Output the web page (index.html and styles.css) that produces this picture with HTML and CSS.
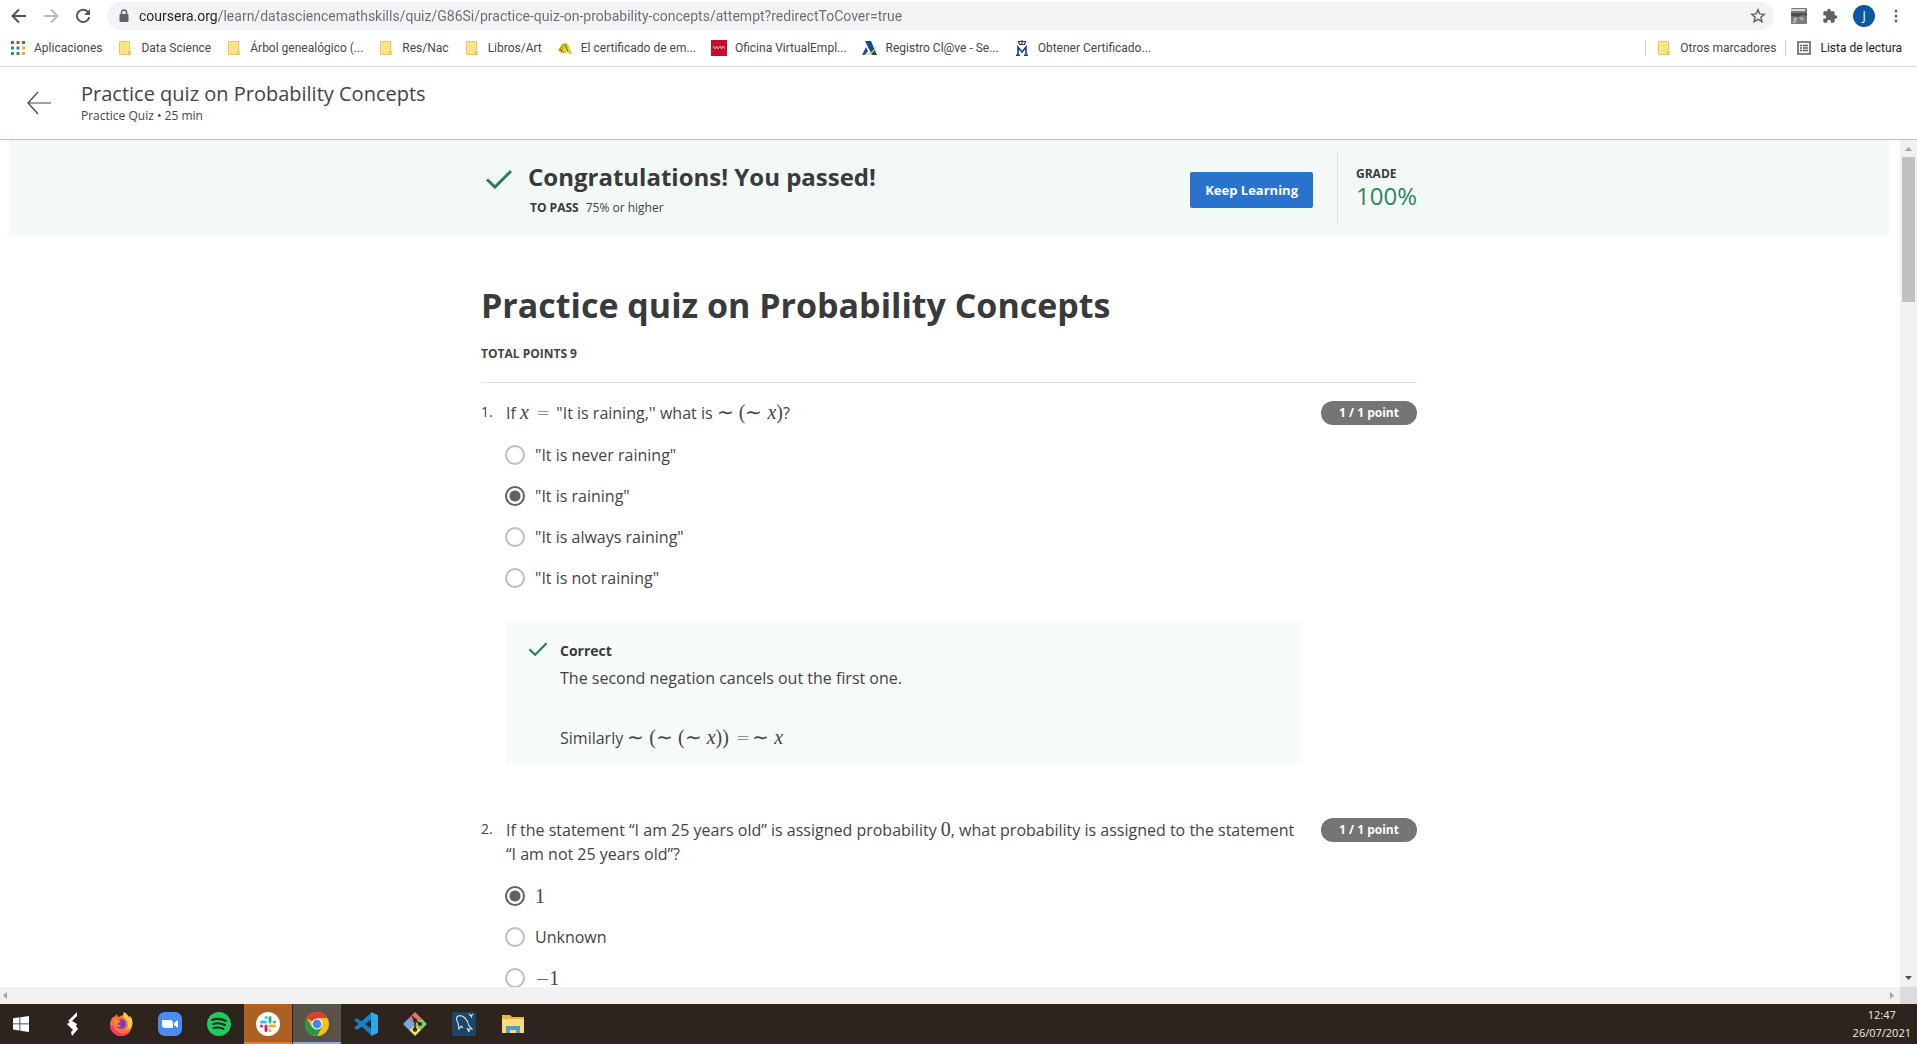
FILE: index.html
```html
<!DOCTYPE html>
<html lang="en">
<head>
<meta charset="utf-8">
<title>Practice quiz on Probability Concepts</title>
<link rel="stylesheet" href="styles.css">
</head>
<body>
<svg class="defs" aria-hidden="true">
  <symbol id="folder" viewBox="0 0 16 16"><path d="M2.500 1.500h10v10h1v3h-11z" fill="#fde38b" stroke="#e8c95c"/><path d="M11.500 11v3.500" stroke="#e3bf3f" fill="none"/></symbol>
  <symbol id="check" viewBox="0 0 28 20"><path d="M2 10.500l8 7.500L26 2" fill="none" stroke="#2a7d57" stroke-width="3"/></symbol>
</svg>

<div class="toolbar">
  <button class="tool" aria-label="Back"><svg width="16" height="16" viewBox="0 0 16 16"><path d="M15 8H2M8 1.500L1.500 8 8 14.500" fill="none" stroke="#50545a" stroke-width="2"/></svg></button>
  <button class="tool" aria-label="Forward"><svg width="16" height="16" viewBox="0 0 16 16"><path d="M1 8h13M8 1.500L14.500 8 8 14.500" fill="none" stroke="#b9bbbe" stroke-width="2"/></svg></button>
  <button class="tool" aria-label="Reload"><svg width="16" height="16" viewBox="0 0 16 16"><path d="M13.200 4.300A6.200 6.200 0 1 0 14.200 9" fill="none" stroke="#50545a" stroke-width="2"/><path d="M15 1v6H9z" fill="#50545a"/></svg></button>
  <div class="omnibox">
    <svg width="10" height="14" viewBox="0 0 10 14"><path d="M2.500 6V3.500a2.500 2.500 0 0 1 5 0V6" fill="none" stroke="#5f6368" stroke-width="1.500"/><rect x="0.500" y="5" width="9" height="8" rx="1" fill="#5f6368"/></svg>
    <input class="url" type="text" aria-label="Address" value="coursera.org/learn/datasciencemathskills/quiz/G86Si/practice-quiz-on-probability-concepts/attempt?redirectToCover=true">
    <svg width="16" height="16" viewBox="0 0 16 16"><path d="M8 1.800l1.800 4.100 4.500.4-3.400 3 1 4.400L8 11.400l-3.900 2.300 1-4.400-3.400-3 4.500-.4z" fill="none" stroke="#5f6368" stroke-width="1.500"/></svg>
  </div>
  <div class="extensions">
    <svg width="16" height="16" viewBox="0 0 16 16"><rect width="16" height="16" rx="1" fill="#7b7b7b"/><path d="M0 1h14v2H0z" fill="#d8d8d8"/><path d="M0 5h16v3l-5-1-4 2-7-1z" fill="#4c4c4c"/><path d="M3 10l3-1-1 6H2zM8 9l5 1-2 3z" fill="#b5b5b5"/></svg>
    <svg width="16" height="16" viewBox="0 0 24 24"><path d="M20.500 11H19V7a2 2 0 0 0-2-2h-4V3.500a2.500 2.500 0 0 0-5 0V5H4a2 2 0 0 0-2 2v3.800h1.500a2.700 2.700 0 0 1 0 5.400H2V20a2 2 0 0 0 2 2h3.800v-1.500a2.700 2.700 0 0 1 5.400 0V22H17a2 2 0 0 0 2-2v-4h1.500a2.500 2.500 0 0 0 0-5z" fill="#5f6368"/></svg>
    <button class="avatar">J</button>
    <svg width="4" height="16" viewBox="0 0 4 16"><g fill="#5f6368"><circle cx="2" cy="3" r="1.500"/><circle cx="2" cy="8" r="1.500"/><circle cx="2" cy="13" r="1.500"/></g></svg>
  </div>
</div>

<nav class="bookmarks">
  <a href="#"><svg viewBox="0 0 16 16"><g fill="#c9453c"><path d="M1 1h3v3H1zM6.500 1h3v3h-3zM12 1h3v3h-3z"/></g><path d="M1 6.500h3v3H1zM1 12h3v3H1zM6.500 12h3v3h-3z" fill="#3c9152"/><path d="M6.500 6.500h3v3h-3z" fill="#3b78d8"/><path d="M12 6.500h3v3h-3zM12 12h3v3h-3z" fill="#dfb52c"/></svg>Aplicaciones</a>
  <a href="#"><svg><use href="#folder"/></svg>Data Science</a>
  <a href="#"><svg><use href="#folder"/></svg>Árbol genealógico (...</a>
  <a href="#"><svg><use href="#folder"/></svg>Res/Nac</a>
  <a href="#"><svg><use href="#folder"/></svg>Libros/Art</a>
  <a href="#"><svg viewBox="0 0 16 16"><path d="M1 10l4-6 3-1-2 9-2 1z" fill="#c4b711"/><path d="M8 3l3 1 4 10h-3l-2-5-1 4H6z" fill="#ddd02a"/><path d="M8 4l3 8M3 9l4 4" stroke="#5d6420" fill="none"/></svg>El certificado de em...</a>
  <a href="#"><svg viewBox="0 0 16 16"><path d="M0 0h16v16H0z" fill="#c60b2b"/><path d="M2 6l2 3 1.500-3L7 9l2-3 1.500 3L12 6l2 3" stroke="#f3b9c2" fill="none"/></svg>Oficina VirtualEmpl...</a>
  <a href="#"><svg viewBox="0 0 16 16"><path d="M3 1h6l6 14h-5z" fill="#154d8c"/><path d="M4 7l2 4-3 4H0z" fill="#1e5591"/><path d="M1 15c7-1 10-4 14-10-2 7-6 10-12 10z" fill="#e5bd55"/></svg>Registro Cl@ve - Se...</a>
  <a href="#"><svg viewBox="0 0 16 16"><g fill="none" stroke="#203c84"><path d="M4.500 1.500h7l-1 3h-5zM8 0v5" stroke-width="1.200"/><path d="M4 15V7l4 5 4-5v8M2 15.300h4M10 15.300h4" stroke-width="1.600"/></g></svg>Obtener Certificado...</a>
  <span class="side">
    <a href="#"><svg><use href="#folder"/></svg>Otros marcadores</a>
    <a class="reading" href="#"><svg viewBox="0 0 16 16"><path d="M2 2h12v12H2z" fill="none" stroke="#5a5e63" stroke-width="1.600"/><path d="M4 5.500h2M4 8h2M4 10.500h2M7 5.500h5M7 8h5M7 10.500h5" stroke="#5a5e63" stroke-width="1.300"/></svg>Lista de lectura</a>
  </span>
</nav>

<header class="quiz-bar">
  <button class="tool" aria-label="Back to course"><svg width="24" height="24" viewBox="0 0 24 24"><path d="M24 12H1M11 1L1 12l10 11" fill="none" stroke="#444" stroke-width="1.200"/></svg></button>
  <div>
    <div class="quiz-name">Practice quiz on Probability Concepts</div>
    <div class="small">Practice Quiz • 25 min</div>
  </div>
</header>

<div class="viewport">
  <main class="page">
    <section class="banner">
      <div class="banner-inner">
        <svg class="big-check"><use href="#check"/></svg>
        <div class="result">
          <h2>Congratulations! You passed!</h2>
          <p class="small"><strong>TO PASS</strong>75% or higher</p>
        </div>
        <button class="keep">Keep Learning</button>
        <div class="grade"><strong class="small">GRADE</strong><span>100%</span></div>
      </div>
    </section>

    <div class="content">
      <h1>Practice quiz on Probability Concepts</h1>
      <p class="total">TOTAL POINTS 9</p>

      <section class="question">
        <span class="number">1.</span>
        <div class="body">
          <p class="prompt">If <span class="math"><i>x</i> <span class="rel">=</span></span> "It is raining,'' what is <span class="math">∼ (∼ <i>x</i>)</span>?</p>
          <div class="options">
            <label><input type="radio" name="q1">"It is never raining"</label>
            <label><input type="radio" name="q1" checked>"It is raining"</label>
            <label><input type="radio" name="q1">"It is always raining"</label>
            <label><input type="radio" name="q1">"It is not raining"</label>
          </div>
          <div class="feedback">
            <svg class="small-check"><use href="#check"/></svg>
            <div>
              <strong>Correct</strong>
              <p>The second negation cancels out the first one.</p>
              <p class="similar">Similarly <span class="math">∼ (∼ (∼ <i>x</i>)) <span class="rel">=</span>∼ <i>x</i></span></p>
            </div>
          </div>
        </div>
        <span class="badge">1 / 1 point</span>
      </section>

      <section class="question">
        <span class="number">2.</span>
        <div class="body">
          <p class="prompt">If the statement “I am 25 years old” is assigned probability <span class="math">0</span>, what probability is assigned to the statement “I am not 25 years old”?</p>
          <div class="options">
            <label><input type="radio" name="q2" checked><span class="math">1</span></label>
            <label><input type="radio" name="q2">Unknown</label>
            <label><input type="radio" name="q2"><span class="math"><span class="sign">−</span>1</span></label>
          </div>
        </div>
        <span class="badge">1 / 1 point</span>
      </section>
    </div>
  </main>
  <div class="scroll-y">
    <svg width="17" height="17" viewBox="0 0 17 17"><path d="M5 11l3.500-4 3.500 4z" fill="#a3a3a3"/></svg>
    <div class="thumb"></div>
    <svg width="17" height="17" viewBox="0 0 17 17"><path d="M5 6h7l-3.500 4z" fill="#505050"/></svg>
  </div>
  <div class="scroll-x">
    <svg width="17" height="17" viewBox="0 0 17 17"><path d="M7 5v7L3 8.500z" fill="#a3a3a3"/></svg>
    <svg width="17" height="17" viewBox="0 0 17 17"><path d="M7 5v7l4-3.500z" fill="#a3a3a3"/></svg>
  </div>
  <div class="corner"></div>
</div>

<footer class="taskbar">
  <button class="start" aria-label="Start"><svg width="16" height="16" viewBox="0 0 16 16"><path d="M0 2.200l6.500-.9v6.200H0zM7.300 1.200L16 0v7.500H7.300zM0 8.300h6.500v6.200L0 13.600zM7.300 8.300H16V16l-8.700-1.200z" fill="#fff"/></svg></button>
  <button aria-label="Launcher"><svg viewBox="0 0 24 24"><path d="M17 0l-9 9 2 1-3 2 6 6-2 2 1 4 6-7-2-3 1-2-5-3 5-5z" fill="#fff"/></svg></button>
  <button aria-label="Firefox"><svg viewBox="0 0 24 24"><path d="M5 5l3-3 1 3 5-2 1-3c3 2 4 3 5 5l1-1c2 3 3 6 2 10-1 6-5 10-11 10S1 19 1 13c0-3 1-6 3-8z" fill="#ff7139"/><path d="M15 0c3 2 4 4 5 6l1-2c2 3 3 6 2 10-2 3-4 4-6 4 3-4 3-9-3-13z" fill="#ffcf3f"/><path d="M1 13c0 7 6 11 11 11 4 0 7-2 9-4-9 3-15 0-17-7z" fill="#f23b68"/><circle cx="12" cy="12" r="5" fill="#7a3fc0"/><path d="M5 8c3-2 5 0 7 1l-4 3 4 2c-3 2-7-1-7-6z" fill="#ff8a2f"/></svg></button>
  <button aria-label="Zoom"><svg viewBox="0 0 24 24"><rect width="24" height="24" rx="7" fill="#4a8cf6"/><path d="M4 8h8a3 3 0 0 1 3 3v5H7a3 3 0 0 1-3-3zM16 11l4-3v8l-4-3z" fill="#fff"/></svg></button>
  <button aria-label="Spotify"><svg viewBox="0 0 24 24"><circle cx="12" cy="12" r="12" fill="#1ecb5c"/><path d="M5 8c5-2 10-1 14 1M6 12c4-1 8-1 12 1M6.500 16c4-1 7-1 10 1" fill="none" stroke="#1c2a1c" stroke-width="2" stroke-linecap="round"/></svg></button>
  <button class="slack" aria-label="Slack"><svg viewBox="0 0 24 24"><circle cx="12" cy="12" r="12" fill="#fff"/><g fill="none" stroke-width="3" stroke-linecap="round"><path d="M5.500 10h4M10 5.500v.1" stroke="#36c5f0"/><path d="M14 5.500V10M18.500 10v.1" stroke="#2eb67d"/><path d="M14 14h4.500M14 18.500v.1" stroke="#ecb22e"/><path d="M10 14v4.500M5.500 14v.1" stroke="#e01e5a"/></g></svg></button>
  <button class="active" aria-label="Chrome"><svg viewBox="0 0 24 24"><circle cx="12" cy="12" r="12" fill="#fbc116"/><path d="M12 12L1.600 6A12 12 0 0 1 22.400 6H12z" fill="#e33b2e"/><path d="M1.600 6A12 12 0 0 0 12 24l5.200-9H7z" fill="#269947"/><circle cx="12" cy="12" r="5.500" fill="#fff"/><circle cx="12" cy="12" r="4.400" fill="#4285f4"/></svg></button>
  <button aria-label="Visual Studio Code"><svg viewBox="0 0 24 24"><path d="M0 8l3-2 15 11v7z" fill="#1a78bd"/><path d="M18 0v7L3 18l-3-2z" fill="#1683c7"/><path d="M17 0l7 3v18l-7 3z" fill="#2fa7ea"/></svg></button>
  <button aria-label="Git"><svg viewBox="0 0 24 24"><path d="M12 0l6 6-6 6-6-6z" fill="#ec7272"/><path d="M18 6l6 6-6 6-6-6z" fill="#8bc765"/><path d="M12 12l6 6-6 6-6-6z" fill="#f4dc72"/><path d="M6 6l6 6-6 6-6-6z" fill="#7aa7ea"/><path d="M9 4l3 4v10M12 8l5 4" stroke="#30281f" stroke-width="1.500" fill="none"/><g fill="#30281f"><circle cx="12" cy="8" r="2"/><circle cx="17" cy="12" r="2"/><circle cx="12" cy="17.500" r="2.200"/></g></svg></button>
  <button aria-label="MySQL Workbench"><svg viewBox="0 0 24 24"><rect width="24" height="24" rx="2" fill="#1d4568"/><path d="M6 4c5-2 10 4 11 10l3 3-3 0 0 3-2-4M6 4c-3 2-1 5 0 7l1 6 2-3 2 2M17 2l2 2 2-2M19 4l1 2" stroke="#d7e3ec" stroke-width="1.100" fill="none"/></svg></button>
  <button aria-label="File Explorer"><svg viewBox="0 0 24 24"><path d="M1 3h8l2 2h12v16H1z" fill="#e9b73c"/><path d="M1 7h22v14H1z" fill="#fbdc78"/><path d="M5 21v-7h14v7h-4v-3H9v3z" fill="#4c9fce"/></svg></button>
  <div class="clock"><span>12:47</span><span>26/07/2021</span></div>
</footer>
</body>
</html>
```
FILE: styles.css
```css
* { box-sizing: border-box; }

body {
  margin: 0;
  height: 100vh;
  display: flex;
  flex-direction: column;
  overflow: hidden;
  background: #fff;
  color: #444;
  font: 16px/24px "Open Sans", "Noto Sans", sans-serif;
}

h1, h2, p { margin: 0; }
h1, h2, strong { color: #383a3b; }
button { font: inherit; border: 0; padding: 0; background: none; }
svg { display: block; flex: none; }
.defs { position: absolute; width: 0; height: 0; }
.small { font-size: 12px; line-height: 16px; }

/* Browser toolbar */
.toolbar {
  display: flex;
  align-items: center;
  gap: 16px;
  height: 32px;
  padding: 0 19px 0 11px;
}
.omnibox {
  flex: 1;
  display: flex;
  align-items: center;
  height: 28px;
  padding: 0 8px 0 12px;
  border-radius: 14px;
  background: #f1f3f4;
}
.url {
  flex: 1;
  min-width: 0;
  margin-left: 10px;
  padding: 0;
  border: 0;
  font: 14px/20px Roboto, sans-serif;
  color: transparent;
  background: linear-gradient(to right, #202124 80px, #686c71 80px);
  -webkit-background-clip: text;
  background-clip: text;
}
.extensions { display: flex; align-items: center; gap: 15px; padding-left: 1px; }
.avatar {
  width: 22px;
  height: 22px;
  border-radius: 50%;
  background: #0b57a0;
  color: #fff;
  font-size: 12px;
  line-height: 22px;
}
.extensions .avatar + svg { margin-left: 4px; }

/* Bookmarks */
.bookmarks {
  display: flex;
  align-items: center;
  gap: 15px;
  height: 35px;
  padding: 0 15px 2px 10px;
  border-bottom: 1px solid #d5d6d8;
}
.bookmarks a {
  display: flex;
  align-items: center;
  gap: 8px;
  color: #45484c;
  font: 12px/16px Roboto, sans-serif;
  text-decoration: none;
  white-space: nowrap;
}
.bookmarks svg { width: 16px; height: 16px; }
.side { display: flex; margin-left: auto; }
.side a { padding-left: 10px; border-left: 1px solid #cfd1d4; }
.side .reading { margin-left: 9px; color: #202124; }

/* Quiz header */
.quiz-bar {
  display: flex;
  align-items: center;
  gap: 30px;
  height: 73px;
  padding-left: 27px;
  border-bottom: 1px solid #bdbdbd;
}
.quiz-name { font-size: 20px; line-height: 26px; }
.quiz-bar .small { line-height: 18px; }

/* Scrolling area */
.viewport {
  flex: 1;
  min-height: 0;
  display: grid;
  grid-template: minmax(0, 1fr) 17px / minmax(0, 1fr) 17px;
}
.page { overflow: hidden; padding: 0 11px 0 9px; }
.scroll-y, .scroll-x {
  display: flex;
  justify-content: space-between;
  background: #f1f1f1;
}
.scroll-y { flex-direction: column; align-items: center; }
.thumb { width: 13px; height: 145px; margin-bottom: auto; background: #c1c1c1; }
.corner { background: #dcdcdc; }

/* Result banner */
.banner { background: #f3f9f7; }
.banner-inner {
  display: flex;
  align-items: center;
  max-width: 936px;
  height: 96px;
  margin: 0 auto;
}
.big-check { width: 28px; height: 20px; margin: -18px 15px 0 4px; }
.result { flex: 1; }
.result h2 { font-size: 24px; line-height: 32px; }
.result p { margin: 7px 2px 0; }
.result strong { margin-right: 7px; }
.keep {
  height: 36px;
  margin-top: 4px;
  padding: 0 15px;
  border-radius: 2px;
  background: #2a73cc;
  color: #fff;
  font-size: 13px;
  font-weight: 700;
}
.grade {
  display: flex;
  flex-direction: column;
  height: 70px;
  margin-left: 24px;
  padding-top: 13px;
  padding-left: 18px;
  border-left: 1px solid #dadfdd;
}
.grade span { color: #2f8560; font-size: 24px; line-height: 28px; }

/* Questions */
.content { max-width: 936px; margin: 0 auto; padding-top: 46px; }
h1 { font-size: 34px; line-height: 46px; }
.total {
  padding: 14px 0 16px;
  border-bottom: 1px solid #e0e0e0;
  font-size: 12px;
  font-weight: 700;
}
.question { display: flex; align-items: flex-start; padding-top: 18px; }
.question + .question { padding-top: 53px; }
.number { width: 25px; flex: none; font-size: 14px; line-height: 22px; }
.body { flex: 1; }
.badge {
  width: 96px;
  margin-left: 20px;
  border-radius: 12px;
  background: #757575;
  color: #fff;
  font-size: 12px;
  font-weight: 700;
  text-align: center;
}
.math { font: 20px/20px "Liberation Serif", serif; }
.rel, .sign { font: 200 17px/20px "DejaVu Sans", sans-serif; }
.rel { margin: 0 2px; }
.options { display: grid; gap: 17px; padding-top: 18px; }
.options label { display: flex; align-items: center; gap: 10px; min-height: 24px; }
.options input {
  appearance: none;
  width: 20px;
  height: 20px;
  margin: 0 0 0 -1px;
  border: 2px solid #bdbdbd;
  border-radius: 50%;
}
.options input:checked {
  border-color: #616161;
  background: radial-gradient(circle, #616161 5px, transparent 6px);
}
.feedback {
  display: flex;
  gap: 12px;
  margin-top: 31px;
  padding: 18px 22px 15px;
  background: #f7fbfa;
}
.feedback strong { display: block; font-size: 14px; }
.feedback p { margin-top: 3px; }
.feedback .similar { margin-top: 36px; }
.small-check { width: 20px; height: 16px; margin-top: 2px; }

/* Taskbar */
.taskbar {
  display: flex;
  gap: 1px;
  height: 40px;
  background: #2d251d;
}
.taskbar button { display: grid; place-items: center; width: 48px; }
.taskbar svg { width: 24px; height: 24px; }
.taskbar .start { width: 47px; padding-right: 5px; }
.taskbar .start svg { width: 16px; height: 16px; }
.taskbar .slack { background: #ad6023; box-shadow: inset 0 -2px #ff7410; }
.taskbar .active { background: #59524b; box-shadow: inset 0 -2px #76b1e8; }
.clock {
  display: flex;
  flex-direction: column;
  align-items: center;
  justify-content: center;
  margin-left: auto;
  padding-right: 6px;
  color: #f1eeea;
  font: 11px/18px "Open Sans", sans-serif;
}
```
